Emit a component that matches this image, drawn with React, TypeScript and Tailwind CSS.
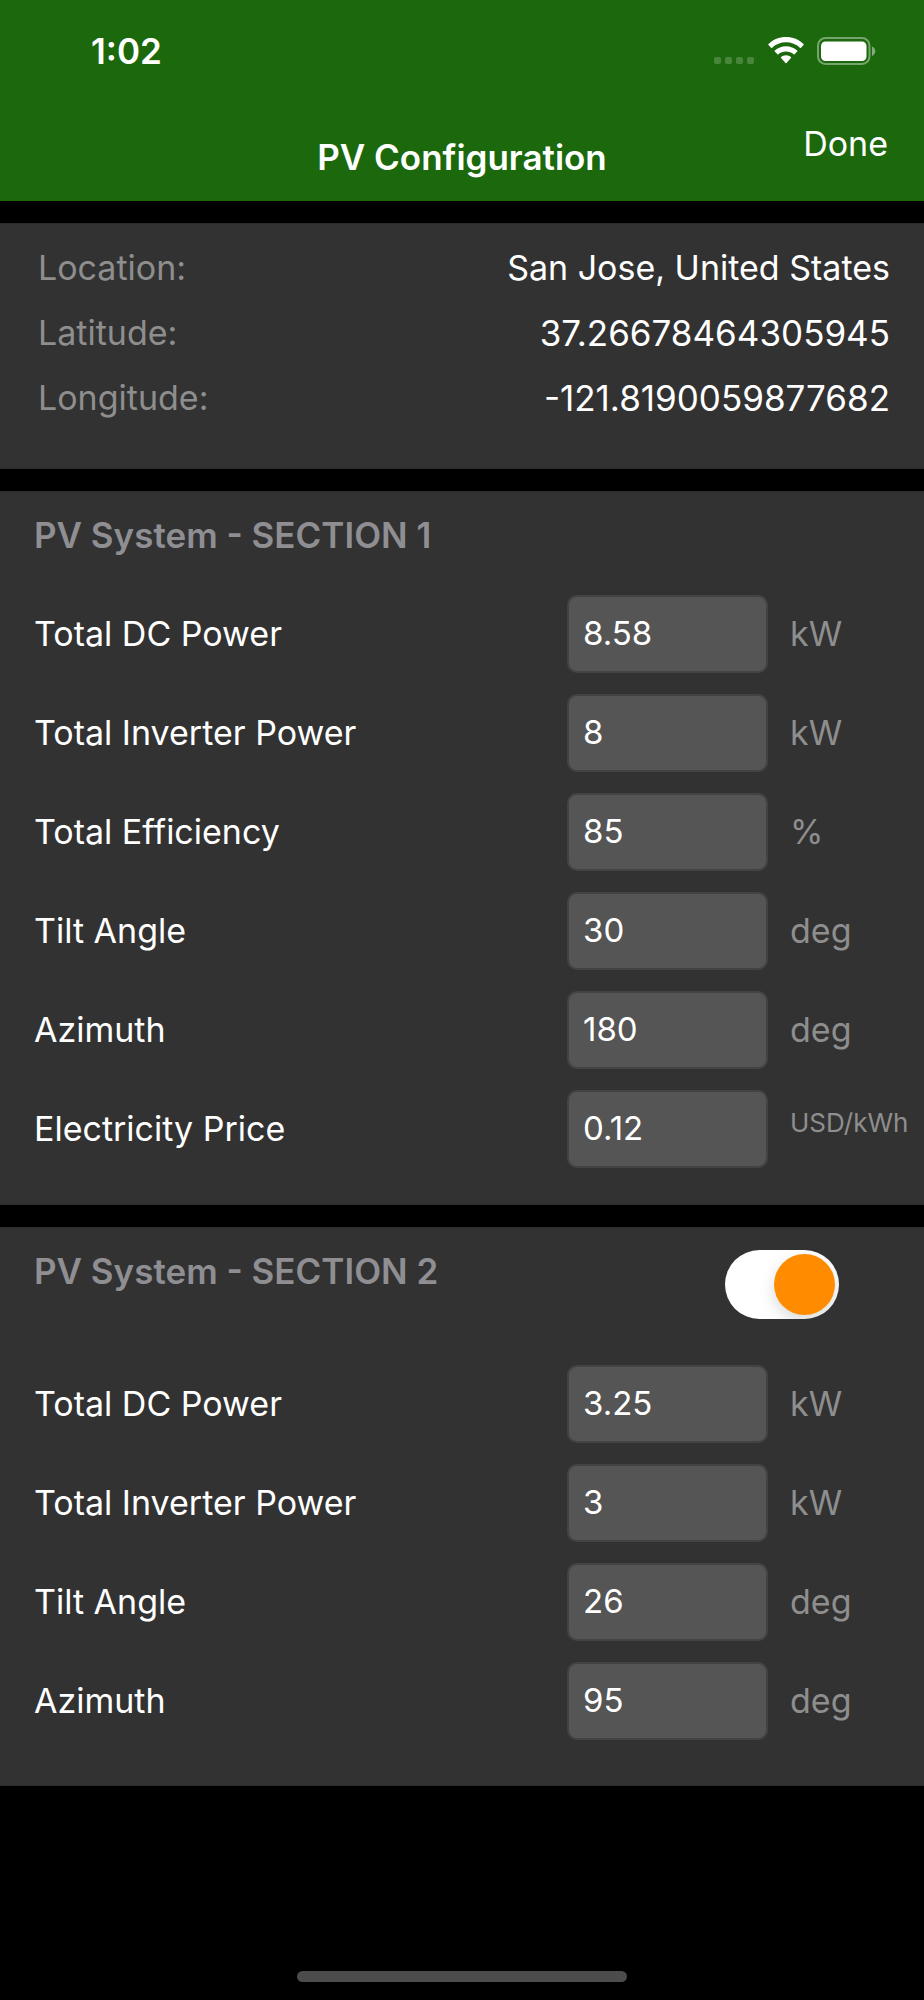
import { useState, type ReactNode } from "react";

type Field = {
  id: string;
  label: string;
  value: string;
  unit: string;
  smallUnit?: boolean;
};

const sectionOne: Field[] = [
  { id: "s1-dc", label: "Total DC Power", value: "8.58", unit: "kW" },
  { id: "s1-inverter", label: "Total Inverter Power", value: "8", unit: "kW" },
  { id: "s1-efficiency", label: "Total Efficiency", value: "85", unit: "%" },
  { id: "s1-tilt", label: "Tilt Angle", value: "30", unit: "deg" },
  { id: "s1-azimuth", label: "Azimuth", value: "180", unit: "deg" },
  {
    id: "s1-price",
    label: "Electricity Price",
    value: "0.12",
    unit: "USD/kWh",
    smallUnit: true,
  },
];

const sectionTwo: Field[] = [
  { id: "s2-dc", label: "Total DC Power", value: "3.25", unit: "kW" },
  { id: "s2-inverter", label: "Total Inverter Power", value: "3", unit: "kW" },
  { id: "s2-tilt", label: "Tilt Angle", value: "26", unit: "deg" },
  { id: "s2-azimuth", label: "Azimuth", value: "95", unit: "deg" },
];

function SignalDots() {
  return (
    <div className="flex gap-1 self-end pb-px">
      <span className="size-[7px] rounded-xs bg-white/20" />
      <span className="size-[7px] rounded-xs bg-white/20" />
      <span className="size-[7px] rounded-xs bg-white/20" />
      <span className="size-[7px] rounded-xs bg-white/20" />
    </div>
  );
}

function WifiIcon() {
  return (
    <svg width="36" height="27" viewBox="0 0 36 27" fill="white" aria-hidden="true">
      <path d="M18 0C24.8 0 31 2.6 35.5 7c.3.3.3.8 0 1.1l-2.5 2.6c-.3.3-.8.3-1.1 0C28.2 7.3 23.3 5.3 18 5.3S7.8 7.3 4.1 10.7c-.3.3-.8.3-1.1 0L.5 8.1c-.3-.3-.3-.8 0-1.1C5 2.6 11.2 0 18 0Z" />
      <path d="M18 9.2c4.3 0 8.2 1.6 11.2 4.3.3.3.3.8 0 1.1l-2.6 2.6c-.3.3-.7.3-1 0-2-1.8-4.7-2.8-7.6-2.8s-5.6 1-7.6 2.8c-.3.3-.7.3-1 0l-2.6-2.6c-.3-.3-.3-.8 0-1.1C9.8 10.8 13.7 9.2 18 9.2Z" />
      <path d="M18 18.2c1.9 0 3.6.7 4.9 1.8.3.3.3.8 0 1.1l-4.4 4.9c-.3.3-.7.3-1 0l-4.4-4.9c-.3-.3-.3-.8 0-1.1 1.3-1.1 3-1.8 4.9-1.8Z" />
    </svg>
  );
}

function BatteryIcon() {
  return (
    <svg width="60" height="28" viewBox="0 0 60 28" fill="none" aria-hidden="true">
      <rect x="2" y="1" width="51.5" height="26" rx="7.5" stroke="white" strokeOpacity="0.4" strokeWidth="2" />
      <rect x="5" y="4.5" width="45.5" height="19.5" rx="4.5" fill="white" />
      <path d="M56 9.5c2 .8 3.3 2.5 3.3 4.700s-1.300 3.900-3.300 4.700Z" fill="white" fillOpacity="0.45" />
    </svg>
  );
}

function Header() {
  return (
    <header className="bg-[#1c680c] pb-[23px]">
      <div className="flex h-[101px] items-center justify-between pr-12 pl-[91px]">
        <span className="text-[35px] leading-[42px] font-semibold">1:02</span>
        <div className="flex items-center">
          <SignalDots />
          <div className="flex items-center gap-3 pl-3.5">
            <WifiIcon />
            <BatteryIcon />
          </div>
        </div>
      </div>
      <div className="grid h-[77px] grid-cols-[1fr_auto_1fr] px-9 pt-[22px]">
        <h1 className="col-start-2 self-end text-[35px] leading-[42px] font-semibold">
          PV Configuration
        </h1>
        <button type="button" className="self-start justify-self-end text-[34px] leading-[42px]">
          Done
        </button>
      </div>
    </header>
  );
}

function Panel({ children }: { children: ReactNode }) {
  return (
    <section className="border-y border-[#2a2a2a] bg-[#323232]">{children}</section>
  );
}

function InfoRow({
  label,
  value,
  numeric,
}: {
  label: string;
  value: string;
  numeric?: boolean;
}) {
  return (
    <div className="flex justify-between">
      <dt className="text-[34px] leading-[42px] text-[#8e8e8e]">{label}</dt>
      <dd
        className={
          numeric ? "text-[35px] leading-[42px]" : "text-[34px] leading-[42px]"
        }
      >
        {value}
      </dd>
    </div>
  );
}

function SectionTitle({ children }: { children: ReactNode }) {
  return (
    <h2 className="text-[35px] leading-[42px] font-semibold text-[#8e8e93]">
      {children}
    </h2>
  );
}

function FieldRow({ field }: { field: Field }) {
  const [value, setValue] = useState(field.value);

  return (
    <div className="flex h-[78px] items-center">
      <label htmlFor={field.id} className="min-w-0 flex-1 text-[34px] leading-[42px]">
        {field.label}
      </label>
      <input
        id={field.id}
        type="text"
        inputMode="decimal"
        value={value}
        onChange={(e) => setValue(e.target.value)}
        className="h-full w-[201px] rounded-[10px] border-2 border-[#434343] bg-[#555555] px-3.5 pb-0.5 text-[33px] leading-[42px] outline-none"
      />
      <span
        className={
          field.smallUnit
            ? "w-[156px] pb-3 pl-[22px] text-[26px] leading-8 text-[#8e8e8e]"
            : "w-[156px] pl-[22px] text-[34px] leading-[42px] text-[#8e8e8e]"
        }
      >
        {field.unit}
      </span>
    </div>
  );
}

function FieldList({ fields }: { fields: Field[] }) {
  return (
    <div className="flex flex-col gap-[21px] pb-9 pl-[34px]">
      {fields.map((field) => (
        <FieldRow key={field.id} field={field} />
      ))}
    </div>
  );
}

function Toggle({ label }: { label: string }) {
  const [on, setOn] = useState(true);

  return (
    <label className="flex h-[69px] w-[114px] cursor-pointer items-center overflow-hidden rounded-full bg-white p-1">
      <input
        type="checkbox"
        role="switch"
        aria-label={label}
        checked={on}
        onChange={(e) => setOn(e.target.checked)}
        className="size-[61px] appearance-none rounded-full bg-[#ff8c00] shadow-[0_6px_16px_rgba(0,0,0,0.15)] checked:ml-auto"
      />
    </label>
  );
}

export default function App() {
  return (
    <div className="flex min-h-screen flex-col bg-black font-['Inter','Liberation_Sans',sans-serif] text-white">
      <Header />
      <main className="flex flex-col gap-[22px] pt-[22px]">
        <Panel>
          <dl className="flex flex-col gap-[23px] pt-[23px] pr-[34px] pb-[49px] pl-[38px]">
            <InfoRow label="Location:" value="San Jose, United States" />
            <InfoRow label="Latitude:" value="37.26678464305945" numeric />
            <InfoRow label="Longitude:" value="-121.8190059877682" numeric />
          </dl>
        </Panel>
        <Panel>
          <div className="pt-[22px] pb-[39px] pl-[34px]">
            <SectionTitle>PV System - SECTION 1</SectionTitle>
          </div>
          <FieldList fields={sectionOne} />
        </Panel>
        <Panel>
          <div className="flex items-start justify-between pt-[22px] pr-[85px] pb-[46px] pl-[34px]">
            <SectionTitle>PV System - SECTION 2</SectionTitle>
            <Toggle label="PV System - SECTION 2" />
          </div>
          <div className="pb-[9px]">
            <FieldList fields={sectionTwo} />
          </div>
        </Panel>
      </main>
      <footer className="mt-auto flex justify-center pb-[18px]">
        <div className="h-[11px] w-[330px] rounded-full bg-[#4c4c4c]" />
      </footer>
    </div>
  );
}
